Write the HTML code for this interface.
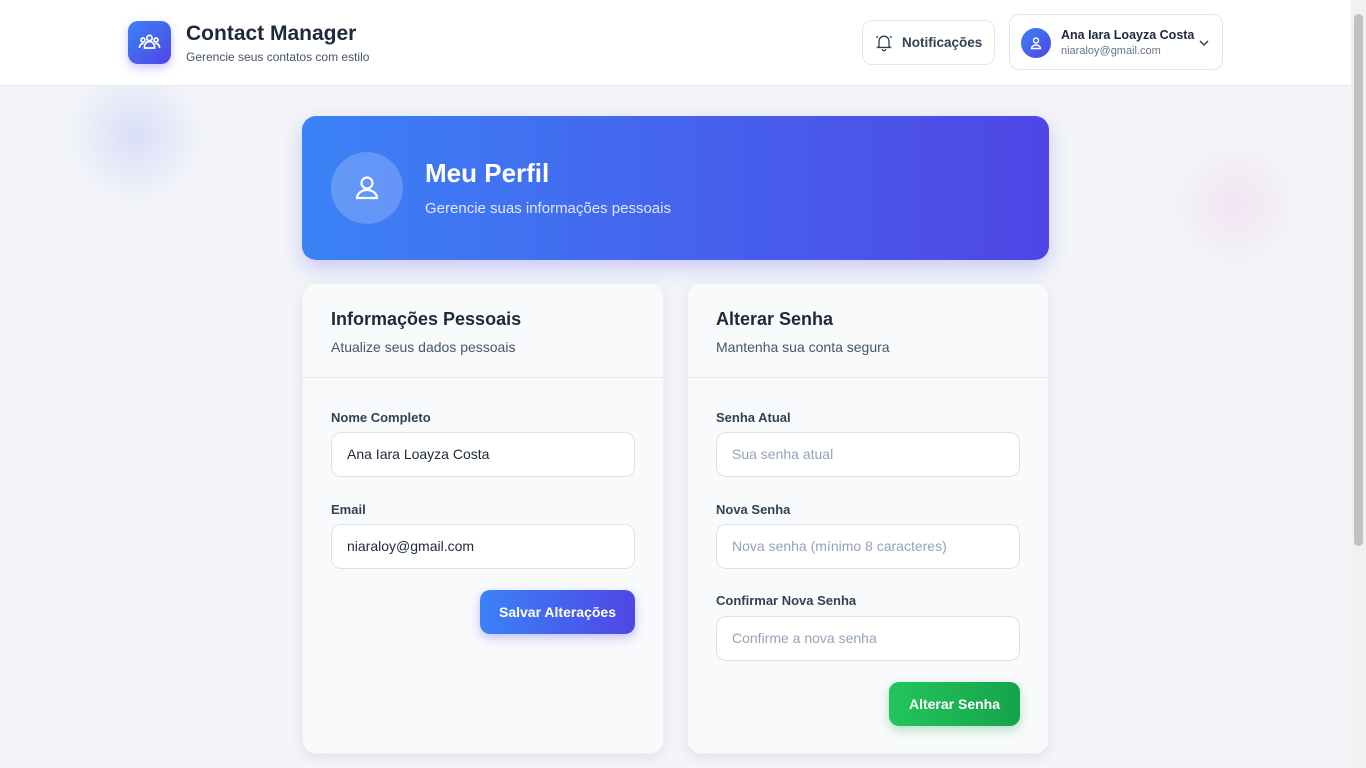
<!DOCTYPE html>
<html><head><meta charset="utf-8"><style>
*{box-sizing:border-box;margin:0;padding:0}
body{width:1366px;height:768px;overflow:hidden;font-family:"Liberation Sans",sans-serif;background:#f3f5f9;position:relative;color:#1e293b}
.scroll{position:absolute;right:0;top:0;width:15px;height:768px;background:#f1f1f1}
.scroll div{position:absolute;left:3px;top:14px;width:9px;height:532px;background:#c1c1c1;border-radius:5px}
header{position:absolute;left:0;top:0;width:1351px;height:86px;background:#fff;border-bottom:1px solid #e5e7eb}
.logo{position:absolute;left:128px;top:21px;width:43px;height:43px;border-radius:10px;background:linear-gradient(135deg,#3b82f6,#4f46e5);box-shadow:0 4px 10px rgba(79,70,229,.3)}
.blob1{position:absolute;left:60px;top:60px;width:150px;height:150px;border-radius:50%;background:radial-gradient(circle,rgba(99,120,240,.18),rgba(99,120,240,0) 65%)}
.blob2{position:absolute;left:1160px;top:130px;width:150px;height:150px;border-radius:50%;background:radial-gradient(circle,rgba(236,110,190,.12),rgba(236,110,190,0) 65%)}
.btn{position:absolute;border:1px solid #e5e7eb;border-radius:10px;background:#fff}
.hero{position:absolute;left:302px;top:116px;width:747px;height:144px;border-radius:14px;background:linear-gradient(90deg,#3b82f6,#4f46e5);box-shadow:0 8px 20px rgba(79,70,229,.25);color:#fff}
.card{position:absolute;top:283px;height:471px;background:#f8fafc;border-radius:14px;box-shadow:0 4px 14px rgba(0,0,0,.08);border:1px solid #eef0f4}
.card h2{position:absolute;left:28px;top:25px;font-size:18px;font-weight:bold;color:#1e293b}
.card .sub{position:absolute;left:28px;top:55px;font-size:14px;color:#475569}
.card hr{position:absolute;left:0;top:93px;width:100%;border:0;border-top:1px solid #e5e7eb}
.lbl{position:absolute;left:28px;font-size:13px;font-weight:bold;color:#334155}
.inp{position:absolute;left:28px;width:304px;height:45px;border:1px solid #dde2ea;border-radius:10px;background:#fff;padding:13px 15px;font-size:14px;color:#1e293b}
.ph{color:#94a3b8}
.b{position:absolute;height:44px;border-radius:10px;color:#fff;font-weight:bold;font-size:14px;text-align:center;line-height:44px}
</style></head><body>
<div class="blob1"></div><div class="blob2"></div>
<header>
<div class="logo"><svg width="43" height="43" viewBox="0 0 43 43" fill="none" stroke="#fff" stroke-width="1.7"><circle cx="21.5" cy="17" r="2.6"/><circle cx="15" cy="19" r="2"/><circle cx="28" cy="19" r="2"/><path d="M16.5 27v-1.5a5 5 0 0 1 10 0V27z"/><path d="M11.5 27v-1a3.5 3.5 0 0 1 4-3.3M31.5 27v-1a3.5 3.5 0 0 0-4-3.3"/></svg></div>
<div style="position:absolute;left:186px;top:22px;font-size:21px;font-weight:bold;color:#1e293b">Contact Manager</div>
<div style="position:absolute;left:186px;top:50px;font-size:12px;color:#475569">Gerencie seus contatos com estilo</div>
<div class="btn" style="left:862px;top:20px;width:133px;height:45px">
<svg style="position:absolute;left:11px;top:11px" width="20" height="20" viewBox="0 0 24 24" fill="none" stroke="#334155" stroke-width="1.6"><path d="M6 17V11a6 6 0 0 1 12 0v6l1.5 1.5h-15z"/><path d="M10 20.5a2 2 0 0 0 4 0M3 7l1.5-2M21 7l-1.5-2"/></svg>
<span style="position:absolute;left:39px;top:14px;font-size:13.5px;font-weight:bold;color:#334155">Notificações</span></div>
<div class="btn" style="left:1009px;top:14px;width:214px;height:56px">
<div style="position:absolute;left:11px;top:13px;width:30px;height:30px;border-radius:50%;background:linear-gradient(135deg,#3b82f6,#4f46e5)"><svg width="30" height="30" viewBox="0 0 30 30" fill="none" stroke="#fff" stroke-width="1.4"><circle cx="15" cy="12.5" r="2.5"/><path d="M10.5 20.5a4.5 3.5 0 0 1 9 0z"/></svg></div>
<div style="position:absolute;left:51px;top:13px;font-size:12.5px;font-weight:bold;color:#1e293b">Ana Iara Loayza Costa</div>
<div style="position:absolute;left:51px;top:30px;font-size:11px;color:#64748b">niaraloy@gmail.com</div>
<svg style="position:absolute;left:188px;top:22px" width="12" height="12" viewBox="0 0 12 12" fill="none" stroke="#334155" stroke-width="1.5"><path d="M2 4l4 4 4-4"/></svg></div>
</header>
<div class="hero">
<div style="position:absolute;left:29px;top:36px;width:72px;height:72px;border-radius:50%;background:rgba(255,255,255,.2)"><svg width="72" height="72" viewBox="0 0 72 72" fill="none" stroke="#fff" stroke-width="2.2"><circle cx="36" cy="31" r="5.5"/><path d="M26 46a10 8 0 0 1 20 0z"/></svg></div>
<div style="position:absolute;left:123px;top:42px;font-size:26px;font-weight:bold">Meu Perfil</div>
<div style="position:absolute;left:123px;top:84px;font-size:15px;color:#e0e7ff">Gerencie suas informações pessoais</div>
</div>
<div class="card" style="left:302px;width:362px">
<h2>Informações Pessoais</h2><div class="sub">Atualize seus dados pessoais</div><hr>
<div class="lbl" style="top:126px">Nome Completo</div><div class="inp" style="top:148px">Ana Iara Loayza Costa</div>
<div class="lbl" style="top:218px">Email</div><div class="inp" style="top:240px">niaraloy@gmail.com</div>
<div class="b" style="left:177px;top:306px;width:155px;background:linear-gradient(90deg,#3b82f6,#4f46e5);box-shadow:0 4px 10px rgba(79,70,229,.3)">Salvar Alterações</div>
</div>
<div class="card" style="left:687px;width:362px">
<h2>Alterar Senha</h2><div class="sub">Mantenha sua conta segura</div><hr>
<div class="lbl" style="top:126px">Senha Atual</div><div class="inp ph" style="top:148px">Sua senha atual</div>
<div class="lbl" style="top:218px">Nova Senha</div><div class="inp ph" style="top:240px">Nova senha (mínimo 8 caracteres)</div>
<div class="lbl" style="top:309px">Confirmar Nova Senha</div><div class="inp ph" style="top:332px">Confirme a nova senha</div>
<div class="b" style="left:201px;top:398px;width:131px;background:linear-gradient(90deg,#22c55e,#16a34a);box-shadow:0 4px 10px rgba(22,163,74,.3)">Alterar Senha</div>
</div>
<div class="scroll"><div></div></div>
</body></html>
